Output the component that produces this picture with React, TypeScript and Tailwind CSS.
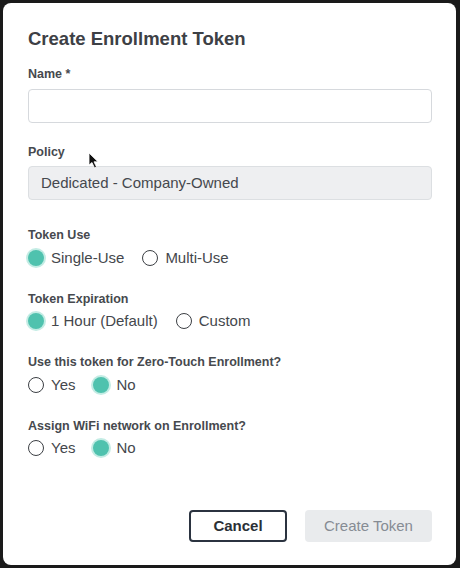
import { useState } from "react";

type Option = { value: string; label: string };

const RadioGroup = ({
  label,
  options,
  value,
  onChange,
}: {
  label: string;
  options: Option[];
  value: string;
  onChange: (v: string) => void;
}) => (
  <div>
    <div className="text-[12.5px] leading-4 font-bold text-[#46494e] mb-[4.5px]">{label}</div>
    <div className="flex items-center h-5 gap-[18px]">
      {options.map((opt) => {
        const checked = opt.value === value;
        return (
          <label key={opt.value} className="flex items-center gap-[7px] cursor-pointer" onClick={() => onChange(opt.value)}>
            {checked ? (
              <span className="w-4 h-4 rounded-full bg-[#4fc2ae] ring-2 ring-[#c3ece4]" />
            ) : (
              <span className="w-4 h-4 rounded-full border-[1.5px] border-[#3c3f44] bg-white" />
            )}
            <span className="text-[15px] leading-5 text-[#44474c]">{opt.label}</span>
          </label>
        );
      })}
    </div>
  </div>
);

export default function App() {
  const [tokenUse, setTokenUse] = useState("single");
  const [expiration, setExpiration] = useState("hour");
  const [zeroTouch, setZeroTouch] = useState("no");
  const [wifi, setWifi] = useState("no");

  return (
    <div className="w-[460px] h-[568px] bg-[#1a1a1a] pt-[3px] pl-[3px] pr-[4px] pb-[3px]" style={{ fontFamily: '"Liberation Sans", Arial, sans-serif' }}>
      <div className="relative w-full h-full bg-white rounded-lg pt-6 pl-[25px] pr-6 flex flex-col">
        <h2 className="text-[18.5px] leading-6 font-bold text-[#3d4045]">Create Enrollment Token</h2>

        <div className="mt-[15px] text-[12.5px] leading-4 font-bold text-[#46494e]">Name *</div>
        <input className="mt-[7px] h-[34px] w-full rounded border border-[#d6d9dd] bg-white px-3 text-[15px] outline-none" />

        <div className="mt-[21px] text-[12.5px] leading-4 font-bold text-[#46494e]">Policy</div>
        <div className="mt-[6px] h-[34px] w-full rounded border border-[#dcdfe2] bg-[#eeeff1] px-[12px] flex items-center text-[15px] text-[#45484d]">
          Dedicated - Company-Owned
        </div>

        <div className="mt-[27px] flex flex-col gap-[23px]">
          <RadioGroup
            label="Token Use"
            value={tokenUse}
            onChange={setTokenUse}
            options={[
              { value: "single", label: "Single-Use" },
              { value: "multi", label: "Multi-Use" },
            ]}
          />
          <RadioGroup
            label="Token Expiration"
            value={expiration}
            onChange={setExpiration}
            options={[
              { value: "hour", label: "1 Hour (Default)" },
              { value: "custom", label: "Custom" },
            ]}
          />
          <RadioGroup
            label="Use this token for Zero-Touch Enrollment?"
            value={zeroTouch}
            onChange={setZeroTouch}
            options={[
              { value: "yes", label: "Yes" },
              { value: "no", label: "No" },
            ]}
          />
          <RadioGroup
            label="Assign WiFi network on Enrollment?"
            value={wifi}
            onChange={setWifi}
            options={[
              { value: "yes", label: "Yes" },
              { value: "no", label: "No" },
            ]}
          />
        </div>

        <div className="mt-[52px] flex justify-end gap-[18px]">
          <button className="w-[98px] h-[32px] rounded border-2 border-[#2b3340] bg-white text-[15px] font-bold text-[#2b3036]">
            Cancel
          </button>
          <button disabled className="w-[127px] h-[32px] rounded bg-[#e9ebed] text-[15px] text-[#868c94]">
            Create Token
          </button>
        </div>

        {/* mouse pointer */}
        <svg className="absolute left-[85px] top-[149px]" width="12" height="17" viewBox="0 0 12 17">
          <path d="M1 1 L1 13 L4 10.5 L6.5 16 L8.5 15 L6 9.8 L10 9.8 Z" fill="#111" stroke="#fff" strokeWidth="0.8" />
        </svg>
      </div>
    </div>
  );
}
